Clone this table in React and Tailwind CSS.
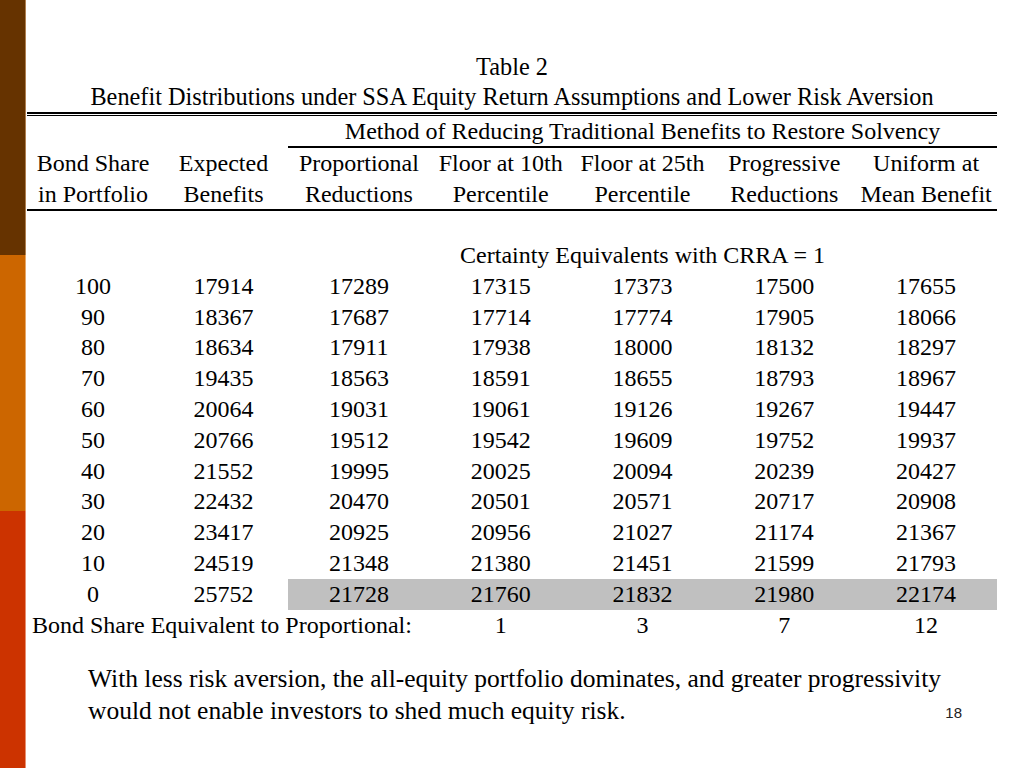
import React from "react";

const rowCls =
  "grid grid-cols-[132px_129px_repeat(5,minmax(0,1fr))] h-[30.8px] leading-[30.8px] text-center";

const data = [
  ["100", "17914", "17289", "17315", "17373", "17500", "17655"],
  ["90", "18367", "17687", "17714", "17774", "17905", "18066"],
  ["80", "18634", "17911", "17938", "18000", "18132", "18297"],
  ["70", "19435", "18563", "18591", "18655", "18793", "18967"],
  ["60", "20064", "19031", "19061", "19126", "19267", "19447"],
  ["50", "20766", "19512", "19542", "19609", "19752", "19937"],
  ["40", "21552", "19995", "20025", "20094", "20239", "20427"],
  ["30", "22432", "20470", "20501", "20571", "20717", "20908"],
  ["20", "23417", "20925", "20956", "21027", "21174", "21367"],
  ["10", "24519", "21348", "21380", "21451", "21599", "21793"],
  ["0", "25752", "21728", "21760", "21832", "21980", "22174"],
];

export default function App() {
  return (
    <div className="flex h-[768px] w-[1024px] overflow-hidden bg-white text-black font-['Liberation_Serif','Times_New_Roman',serif] text-[24px]">
      {/* left decorative bar */}
      <div className="flex w-[26px] shrink-0 flex-col">
        <div className="h-[255px] w-full border-r border-[#b08050] bg-[#663300]" />
        <div className="h-[256px] w-full border-r border-[#e8a868] bg-[#cc6600]" />
        <div className="flex-1 w-full border-r border-[#e89070] bg-[#cc3300]" />
      </div>

      <div className="flex flex-1 flex-col">
        <div className="ml-[1px] w-[970px] pt-[52px]">
          <div className="h-[30px] leading-[30px] text-center text-[24.3px]">Table 2</div>
          <div className="h-[30px] leading-[30px] text-center text-[24.3px] whitespace-nowrap">
            Benefit Distributions under SSA Equity Return Assumptions and Lower Risk Aversion
          </div>
          <div className="h-[4px] border-t-2 border-b border-black" />

          {/* Method row */}
          <div className="grid h-[32px] grid-cols-[132px_129px_repeat(5,minmax(0,1fr))]">
            <div className="col-span-5 col-start-3 border-b-2 border-black text-center leading-[30px]">
              Method of Reducing Traditional Benefits to Restore Solvency
            </div>
          </div>

          {/* header rows */}
          <div className="border-b-2 border-black">
            <div className="grid h-[30.5px] grid-cols-[132px_129px_repeat(5,minmax(0,1fr))] text-center leading-[30.5px]">
              <div>Bond Share</div>
              <div>Expected</div>
              <div>Proportional</div>
              <div>Floor at 10th</div>
              <div>Floor at 25th</div>
              <div>Progressive</div>
              <div className="whitespace-nowrap">Uniform at</div>
            </div>
            <div className="grid h-[30.5px] grid-cols-[132px_129px_repeat(5,minmax(0,1fr))] text-center leading-[30.5px]">
              <div>in Portfolio</div>
              <div>Benefits</div>
              <div>Reductions</div>
              <div>Percentile</div>
              <div>Percentile</div>
              <div>Reductions</div>
              <div className="whitespace-nowrap">Mean Benefit</div>
            </div>
          </div>

          <div className="h-[29px]" />

          <div className={rowCls}>
            <div className="col-span-5 col-start-3">Certainty Equivalents with CRRA = 1</div>
          </div>

          {data.map((r, i) => {
            const shade = i === data.length - 1;
            return (
              <div key={r[0]} className={rowCls}>
                {r.map((v, j) => (
                  <div key={j} className={shade && j >= 2 ? "bg-[#c0c0c0]" : ""}>
                    {v}
                  </div>
                ))}
              </div>
            );
          })}

          <div className={rowCls}>
            <div className="col-span-3 whitespace-nowrap pl-[5px] text-left">
              Bond Share Equivalent to Proportional:
            </div>
            <div>1</div>
            <div>3</div>
            <div>7</div>
            <div>12</div>
          </div>
        </div>

        <div className="mt-[22.6px] flex justify-between pl-[62px] pr-[62px]">
          <p className="whitespace-nowrap text-[25.5px] leading-[32px]">
            With less risk aversion, the all-equity portfolio dominates, and greater progressivity
            <br />
            would not enable investors to shed much equity risk.
          </p>
          <div className="mb-[5px] self-end font-['Liberation_Sans',Arial,sans-serif] text-[15px] leading-[18px] text-[#222]">
            18
          </div>
        </div>
      </div>
    </div>
  );
}
